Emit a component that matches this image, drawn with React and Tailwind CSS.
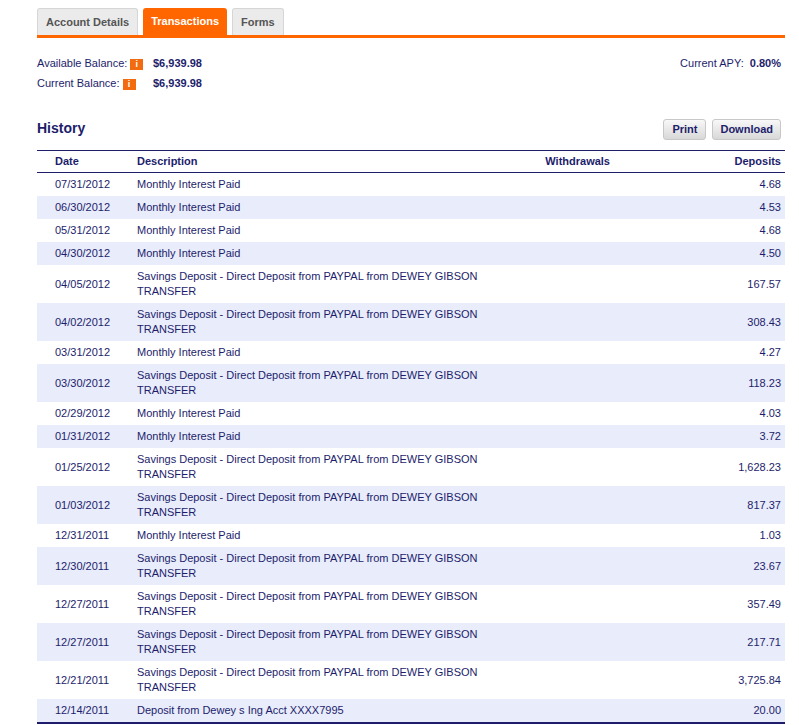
import React from "react";

const rows = [
  ["07/31/2012", "Monthly Interest Paid", "4.68"],
  ["06/30/2012", "Monthly Interest Paid", "4.53"],
  ["05/31/2012", "Monthly Interest Paid", "4.68"],
  ["04/30/2012", "Monthly Interest Paid", "4.50"],
  ["04/05/2012", "P", "167.57"],
  ["04/02/2012", "P", "308.43"],
  ["03/31/2012", "Monthly Interest Paid", "4.27"],
  ["03/30/2012", "P", "118.23"],
  ["02/29/2012", "Monthly Interest Paid", "4.03"],
  ["01/31/2012", "Monthly Interest Paid", "3.72"],
  ["01/25/2012", "P", "1,628.23"],
  ["01/03/2012", "P", "817.37"],
  ["12/31/2011", "Monthly Interest Paid", "1.03"],
  ["12/30/2011", "P", "23.67"],
  ["12/27/2011", "P", "357.49"],
  ["12/27/2011", "P", "217.71"],
  ["12/21/2011", "P", "3,725.84"],
  ["12/14/2011", "Deposit from Dewey s Ing Acct XXXX7995", "20.00"],
];

function Info() {
  return (
    <span className="inline-flex items-center justify-center w-[13px] h-[11px] bg-[#f26b0f] text-white text-[9px] font-bold leading-none ml-[3px] align-middle">i</span>
  );
}

export default function App() {
  return (
    <div className="bg-white min-h-[725px] text-[#1d1d6b] text-[11px]" style={{ fontFamily: '"Liberation Sans", Arial, sans-serif' }}>
      <div className="ml-[37px] w-[748px] pt-[8px]">
        <div className="flex gap-[5px] border-b-[3px] border-[#ff6600] items-end">
          <div className="px-[8px] h-[27px] flex items-center bg-[#ebebeb] border border-b-0 border-[#d6d6d6] rounded-t-[3px] text-[#555] font-bold text-[11px]">Account Details</div>
          <div className="px-[8px] h-[27px] flex items-center bg-[#ff6600] rounded-t-[3px] text-white font-bold text-[11px]">Transactions</div>
          <div className="px-[8px] h-[27px] flex items-center bg-[#ebebeb] border border-b-0 border-[#d6d6d6] rounded-t-[3px] text-[#555] font-bold text-[11px]">Forms</div>
        </div>
        <div className="flex justify-between mt-[18px]">
          <div className="flex flex-col gap-[5px] text-[11px] leading-[15px]">
            <div className="flex"><span className="w-[116px]">Available Balance:<Info /></span><span className="font-bold">$6,939.98</span></div>
            <div className="flex"><span className="w-[116px]">Current Balance:<Info /></span><span className="font-bold">$6,939.98</span></div>
          </div>
          <div className="pr-[4px] leading-[15px]">Current APY:&nbsp;&nbsp;<span className="font-bold">0.80%</span></div>
        </div>
        <div className="flex justify-between items-end mt-[27px] mb-[10px]">
          <div className="text-[14px] font-bold mb-[1px]">History</div>
          <div className="flex gap-[6px] pr-[4px]">
            <button className="h-[21px] px-[8px] rounded-[3px] border border-[#c8c8c8] bg-gradient-to-b from-[#f8f8f8] to-[#d8d8d8] font-bold text-[11px]">Print</button>
            <button className="h-[21px] px-[7px] rounded-[3px] border border-[#c8c8c8] bg-gradient-to-b from-[#f8f8f8] to-[#d8d8d8] font-bold text-[11px]">Download</button>
          </div>
        </div>
        <div className="border-t border-b-2 border-[#1d1d6b]">
          <div className="grid grid-cols-[100px_360px_113px_1fr] font-bold h-[22px] items-center border-b border-[#1d1d6b]">
            <div className="pl-[18px]">Date</div>
            <div>Description</div>
            <div className="text-right">Withdrawals</div>
            <div className="text-right pr-[4px]">Deposits</div>
          </div>
          {rows.map((r, i) => (
            <div key={i} className={`grid grid-cols-[100px_360px_113px_1fr] items-center py-[4px] leading-[15px] ${i % 2 ? "bg-[#e8ecfb]" : "bg-white"}`}>
              <div className="pl-[18px]">{r[0]}</div>
              <div>{r[1] === "P" ? (<>Savings Deposit - Direct Deposit from PAYPAL from DEWEY GIBSON<br />TRANSFER</>) : r[1]}</div>
              <div></div>
              <div className="text-right pr-[4px]">{r[2]}</div>
            </div>
          ))}
        </div>
      </div>
    </div>
  );
}
